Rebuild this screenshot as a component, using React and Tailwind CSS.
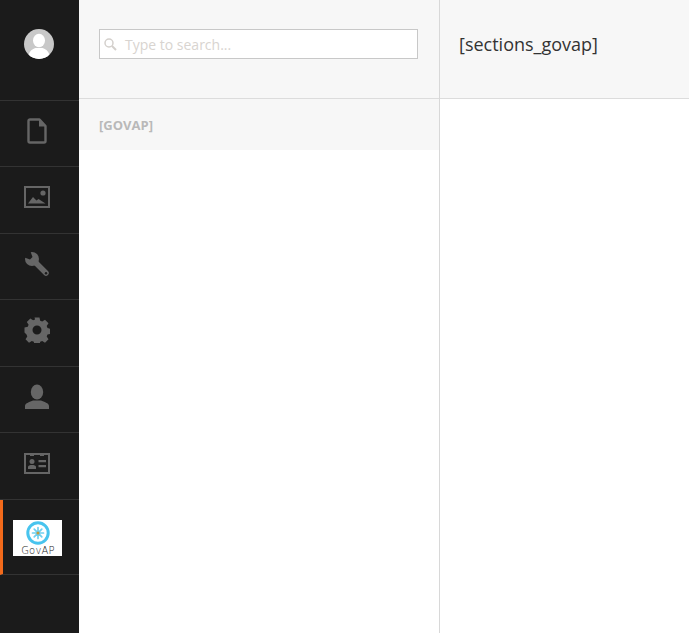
const ic = "#666666";

function NavRow({ h, children, extra = "pb-[5px]" }) {
  return (
    <div className={`${h} ${extra} flex items-center justify-center border-b border-[#333333] shrink-0 pr-[5px]`}>
      {children}
    </div>
  );
}

export default function App() {
  return (
    <div className="flex h-[633px] w-[689px] overflow-hidden bg-white font-['Open_Sans',sans-serif]">
      <aside className="flex w-[79px] shrink-0 flex-col bg-[#1b1b1b]">
        <div className="flex h-[101px] shrink-0 items-center justify-center border-b border-[#333333] pb-[12px] pr-[1px]">
          <div className="h-[30px] w-[30px] overflow-hidden rounded-full bg-[#c8c8c8]">
            <svg viewBox="0 0 30 30" width="30" height="30">
              <ellipse cx="15" cy="11.5" rx="6" ry="6.8" fill="#fff" />
              <path d="M4 30c0-7 4-10 7.5-11h7C22 20 26 23 26 30z" fill="#fff" />
            </svg>
          </div>
        </div>
        <NavRow h="h-[66px]">
          <svg width="20" height="26" viewBox="0 0 20 26" fill="none" stroke={ic} strokeWidth="2.4" strokeLinejoin="round">
            <path d="M3 1.500h9.500l6 6.500v15a1.500 1.500 0 0 1-1.500 1.500H3A1.500 1.500 0 0 1 1.500 23V3A1.500 1.500 0 0 1 3 1.500z" />
            <path d="M12 2v6.500h6.500z" fill={ic} stroke="none" />
          </svg>
        </NavRow>
        <NavRow h="h-[67px]" extra="pb-[6px]">
          <svg width="26" height="22" viewBox="0 0 26 22">
            <rect x="1" y="1" width="24" height="20" fill="none" stroke={ic} strokeWidth="2" />
            <circle cx="19" cy="7" r="2.600" fill={ic} />
            <path d="M4 17.500l5-6.500 3.500 3.500 2-1.500 7 4.500z" fill={ic} />
          </svg>
        </NavRow>
        <NavRow h="h-[66px]">
          <svg width="26" height="26" viewBox="0 0 26 26">
            <circle cx="8" cy="8" r="7" fill={ic} />
            <path d="M10 10L22 22" stroke={ic} strokeWidth="5.500" strokeLinecap="round" />
            <path d="M6.500 0.500L8.500 6 6 8.500 0.500 6.500 -1 -1z" fill="#1b1b1b" />
            <circle cx="22" cy="22.300" r="1.200" fill="#1b1b1b" />
          </svg>
        </NavRow>
        <NavRow h="h-[67px]" extra="pb-[7px]">
          <svg width="26" height="26" viewBox="0 0 26 26">
            <path
              fillRule="evenodd"
              fill={ic}
              d="M10.500 0.500h5l.7 3.300 2 .8 2.800-1.800 3.500 3.500-1.800 2.800.8 2 3.300.7v5l-3.300.7-.8 2 1.800 2.800-3.500 3.500-2.800-1.800-2 .8-.7 3.300h-5l-.7-3.300-2-.8-2.800 1.800-3.500-3.500 1.800-2.800-.8-2L.5 15.500v-5l3.300-.7.8-2L2.800 5l3.500-3.500 2.800 1.800 2-.8zM13 8.500a4.500 4.500 0 1 0 0 9 4.500 4.500 0 0 0 0-9z"
            />
          </svg>
        </NavRow>
        <NavRow h="h-[66px]">
          <svg width="26" height="26" viewBox="0 0 26 26">
            <ellipse cx="13" cy="8" rx="6.200" ry="7.500" fill={ic} />
            <path d="M1 25v-3c0-3 5-4 8-5.500h8c3 1.500 8 2.500 8 5.500v3z" fill={ic} />
          </svg>
        </NavRow>
        <NavRow h="h-[67px]">
          <svg width="26" height="21" viewBox="0 0 26 21">
            <rect x="1" y="1" width="24" height="19" fill="none" stroke={ic} strokeWidth="2" />
            <path d="M6 0h4v3H6zM16 0h4v3h-4z" fill={ic} />
            <circle cx="8" cy="8.500" r="2.500" fill={ic} />
            <path d="M4 16v-2c0-1.500 2-2 4-2s4 .5 4 2v2z" fill={ic} />
            <path d="M14.500 7h7.500v2.200h-7.500zM14.500 12h7.500v2.200h-7.500z" fill={ic} />
          </svg>
        </NavRow>
        <div className="flex h-[75px] shrink-0 items-start border-b border-l-[3px] border-b-[#333333] border-l-[#f26a1b] pl-[10px] pt-[20px]">
          <div className="flex h-[36px] w-[49px] flex-col items-center bg-white">
            <svg width="26" height="25" viewBox="0 0 26 25" className="shrink-0">
              <circle cx="13" cy="13" r="10.200" fill="none" stroke="#48c4ee" strokeWidth="3" />
              <g stroke="#6fd0f0" strokeWidth="1.700" strokeLinecap="round">
                <path d="M13 7.500v11M7.500 13h11M9.200 9.200l7.600 7.600M16.800 9.200l-7.600 7.600" />
              </g>
              <circle cx="13" cy="13" r="1.500" fill="#c59a3c" />
            </svg>
            <span className="ml-[1px] font-['DejaVu_Sans',sans-serif] text-[10px] font-light leading-[11px] tracking-[0.2px] text-[#222222]">GovAP</span>
          </div>
        </div>
      </aside>

      <section className="flex w-[361px] shrink-0 flex-col border-r border-[#d8d8d8]">
        <div className="flex h-[99px] shrink-0 items-center border-b border-[#dcdcdc] bg-[#f7f7f7] px-5 pb-[10px]">
          <div className="flex h-[30px] w-[319px] items-center border border-[#c8c8c8] bg-white pl-[3px]">
            <svg width="14" height="14" viewBox="0 0 14 14" fill="none" stroke="#d4d0cc" strokeWidth="1.500" className="shrink-0">
              <circle cx="6" cy="6" r="4" />
              <path d="M9 9l4 4" strokeWidth="2" />
            </svg>
            <span className="ml-[8px] text-[14px] text-[#d8d4d0]">Type to search...</span>
          </div>
        </div>
        <div className="flex h-[51px] shrink-0 items-center bg-[#f7f7f7] px-5 pt-[2px]">
          <span className="text-[13px] font-bold text-[#b9b9b9]">[GOVAP]</span>
        </div>
      </section>

      <main className="flex min-w-0 flex-1 flex-col">
        <div className="flex h-[99px] shrink-0 items-center border-b border-[#dcdcdc] bg-[#f7f7f7] pb-[10px] pl-[19px]">
          <span className="text-[18px] text-[#333333]">[sections_govap]</span>
        </div>
      </main>
    </div>
  );
}
